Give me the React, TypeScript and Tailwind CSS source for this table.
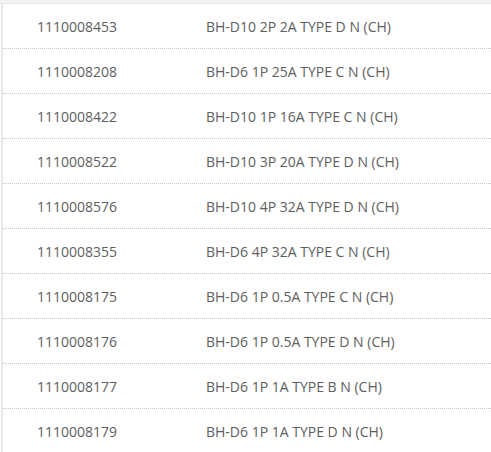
const rows: [string, string][] = [
  ['1110008453', 'BH-D10 2P 2A TYPE D N (CH)'],
  ['1110008208', 'BH-D6 1P 25A TYPE C N (CH)'],
  ['1110008422', 'BH-D10 1P 16A TYPE C N (CH)'],
  ['1110008522', 'BH-D10 3P 20A TYPE D N (CH)'],
  ['1110008576', 'BH-D10 4P 32A TYPE D N (CH)'],
  ['1110008355', 'BH-D6 4P 32A TYPE C N (CH)'],
  ['1110008175', 'BH-D6 1P 0.5A TYPE C N (CH)'],
  ['1110008176', 'BH-D6 1P 0.5A TYPE D N (CH)'],
  ['1110008177', 'BH-D6 1P 1A TYPE B N (CH)'],
  ['1110008179', 'BH-D6 1P 1A TYPE D N (CH)'],
];

export default function App() {
  return (
    <div className="w-[491px] h-[452px] overflow-hidden bg-white font-['Open_Sans',sans-serif] text-[14px] text-[#5e5e5e]">
      <div className="h-[4px] bg-[#f4f4f4] border-b border-[#e4e4e4]" />
      <div className="ml-[1px] border-l-2 border-[#e8e8e8]">
        {rows.map(([code, name]) => (
          <div
            key={code}
            className="flex h-[45px] items-center border-b border-dotted border-[#c8c8c8] last:border-b-0"
          >
            <div className="w-[203px] pl-[34px]">{code}</div>
            <div>{name}</div>
          </div>
        ))}
      </div>
    </div>
  );
}
